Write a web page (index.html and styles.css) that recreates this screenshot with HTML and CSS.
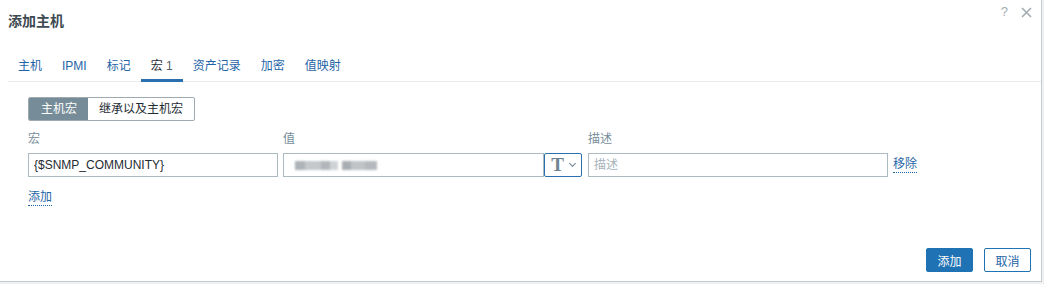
FILE: index.html
```html
<!DOCTYPE html>
<html>

<head>
  <meta charset="UTF-8">
  <title>添加主机</title>
  <link rel="stylesheet" href="styles.css">
</head>

<body>
  <div class="dialog">
    <div class="head">
      <h4 class="title">添加主机</h4>
      <div class="head-ctrls">
        <span class="btn-help">?</span>
        <svg class="btn-close" width="11" height="11" viewBox="0 0 11 11">
          <path d="M1 1 L10 10 M10 1 L1 10" stroke="#a3acb1" stroke-width="1.6" fill="none" />
        </svg>
      </div>
    </div>

    <ul class="tabs">
      <li><a>主机</a></li>
      <li><a>IPMI</a></li>
      <li><a>标记</a></li>
      <li class="active"><a>宏 <sup class="count">1</sup></a></li>
      <li><a>资产记录</a></li>
      <li><a>加密</a></li>
      <li><a>值映射</a></li>
    </ul>

    <div class="tab-panel">
      <div class="segmented">
        <span class="seg active">主机宏</span>
        <span class="seg">继承以及主机宏</span>
      </div>

      <div class="macros">
        <div class="row labels">
          <span class="col-macro">宏</span>
          <span class="col-value">值</span>
          <span class="col-desc">描述</span>
        </div>
        <div class="row">
          <input class="field col-macro" type="text" value="{$SNMP_COMMUNITY}">
          <div class="col-value value-group">
            <div class="field value-field">
              <span class="blur">
                <i class="px b1"></i><i class="px b2"></i><i class="px b3"></i><i class="px b4"></i><i class="px b5"></i><i class="px b6"></i><i class="px b7"></i>
              </span>
            </div>
            <button class="type-btn"><span class="t">T</span><span class="chev"></span></button>
          </div>
          <input class="field col-desc" type="text" placeholder="描述">
          <a class="link">移除</a>
        </div>
      </div>

      <a class="link add-link">添加</a>
    </div>

    <div class="footer">
      <button class="btn primary">添加</button>
      <button class="btn alt">取消</button>
    </div>
  </div>
</body>

</html>
```

FILE: styles.css
```css
body {
  margin: 0;
  background-color: #eef0f1;
  font-family: "Liberation Sans", Arial, "Noto Sans CJK SC", sans-serif;
  font-size: 12px;
  color: #1f2c33;
}

.dialog {
  width: 1041px;
  height: 281px;
  background-color: #fff;
  border-right: 1px solid #c5cbce;
  border-bottom: 1px solid #c5cbce;
  display: flex;
  flex-direction: column;
}

.head {
  height: 50px;
  display: flex;
  justify-content: space-between;
  align-items: flex-start;
  padding: 0 9px 0 8px;
}

.title {
  margin: 12px 0 0;
  font-size: 14px;
  font-weight: bold;
  line-height: 18px;
  color: #3d4a52;
}

.head-ctrls {
  display: flex;
  align-items: center;
  gap: 13px;
  margin-top: 4px;
  color: #a3acb1;
  font-size: 13px;
  line-height: 16px;
}

.tabs {
  list-style: none;
  margin: 0 0 0 8px;
  padding: 0;
  display: flex;
  border-bottom: 1px solid #e7eaec;
}

.tabs li {
  margin-bottom: -1px;
  border-bottom: 3px solid transparent;
}

.tabs li a {
  display: block;
  padding: 7px 10px 4px;
  line-height: 18px;
  color: #1f65a6;
}

.tabs li.active {
  border-bottom-color: #2a6fae;
}

.tabs li.active a {
  color: #1f2c33;
}

.count {
  font-size: 12px;
  vertical-align: baseline;
  color: #555f66;
}

.tab-panel {
  padding: 15px 0 0 28px;
}

.segmented {
  display: inline-flex;
  border: 1px solid #9eaab0;
  border-radius: 2px;
  overflow: hidden;
}

.seg {
  height: 22px;
  line-height: 22px;
  padding: 0 11px;
  color: #1f2c33;
}

.seg.active {
  background-color: #768d99;
  color: #fff;
  padding: 0 11px 0 12px;
}

.macros {
  margin-top: 9px;
}

.row {
  display: flex;
  align-items: center;
  gap: 5px;
}

.labels {
  line-height: 18px;
  color: #768d99;
  margin-bottom: 5px;
}

.col-macro {
  width: 250px;
}

.col-value {
  width: 299px;
}

.col-desc {
  width: 300px;
  margin-left: 1px;
}

.field {
  box-sizing: border-box;
  height: 24px;
  border: 1px solid #acbbc2;
  padding: 0 5px;
  font-family: "Liberation Sans", Arial, "Noto Sans CJK SC", sans-serif;
  font-size: 12px;
  color: #1f2c33;
  background-color: #fff;
  outline: none;
}

.field::placeholder {
  color: #a7b2b8;
}

.value-group {
  display: flex;
}

.value-field {
  flex: 1;
  display: flex;
  align-items: center;
}

.blur {
  display: flex;
  align-items: center;
  filter: blur(1.2px);
  margin-left: 6px;
}

.px {
  display: inline-block;
  height: 9px;
  background-color: #b9bec2;
}

.b1 { width: 10px; background-color: #aeb3b7; }
.b2 { width: 16px; background-color: #c4c8cb; }
.b3 { width: 9px; background-color: #b2b6ba; }
.b4 { width: 8px; background-color: #d0d3d5; }
.b5 { width: 9px; background-color: #a9aeb2; margin-left: 4px; }
.b6 { width: 14px; background-color: #c0c4c7; }
.b7 { width: 12px; background-color: #b5b9bd; }

.type-btn {
  box-sizing: border-box;
  width: 38px;
  height: 24px;
  border: 1px solid #2a6fae;
  border-radius: 2px;
  background-color: #fff;
  display: flex;
  align-items: center;
  justify-content: center;
  gap: 6px;
  padding: 0;
}

.t {
  font-family: "Liberation Serif", "Times New Roman", serif;
  font-size: 19px;
  font-weight: bold;
  color: #6f848f;
  line-height: 20px;
}

.chev {
  width: 4px;
  height: 4px;
  border-right: 1.5px solid #6f848f;
  border-bottom: 1.5px solid #6f848f;
  transform: rotate(45deg);
  margin-top: -3px;
}

.link {
  color: #1f65a6;
  border-bottom: 1px dotted #1f65a6;
  line-height: 15px;
  cursor: pointer;
}

.add-link {
  display: inline-block;
  margin-top: 13px;
}

.footer {
  margin-top: auto;
  display: flex;
  justify-content: flex-end;
  gap: 11px;
  padding: 0 10px 9px 0;
}

.btn {
  box-sizing: border-box;
  width: 47px;
  height: 24px;
  border-radius: 2px;
  font-family: "Liberation Sans", Arial, "Noto Sans CJK SC", sans-serif;
  font-size: 12px;
  padding: 0;
}

.btn.primary {
  background-color: #1f72b3;
  border: 1px solid #1f72b3;
  color: #fff;
}

.btn.alt {
  background-color: #fff;
  border: 1px solid #1f72b3;
  color: #1f65a6;
}
```
